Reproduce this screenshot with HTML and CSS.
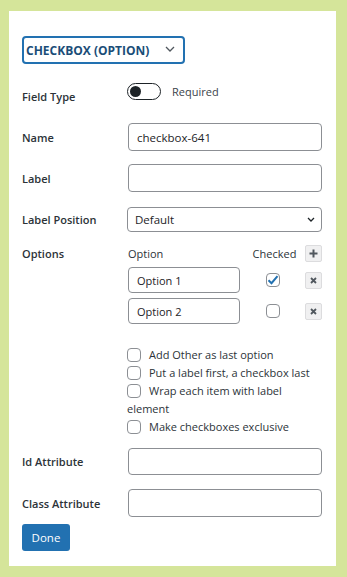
FILE: index.html
```html
<!DOCTYPE html>
<html>
<head>
<meta charset="utf-8">
<link rel="stylesheet" href="styles.css">
</head>
<body>
<div class="panel">
  <div class="type-select">
    <span class="type-text">CHECKBOX (OPTION)</span>
    <svg class="chev-lg" width="10" height="6" viewBox="0 0 10 6"><path d="M1 1l4 4 4-4" fill="none" stroke="#50575e" stroke-width="1.3"/></svg>
  </div>

  <div class="row row-type">
    <div class="lbl lbl-type">Field Type</div>
    <div class="ctl toggle-wrap">
      <span class="toggle"><span class="knob"></span></span>
      <span class="toggle-text">Required</span>
    </div>
  </div>

  <div class="row row-name">
    <div class="lbl">Name</div>
    <div class="ctl"><div class="input">checkbox-641</div></div>
  </div>

  <div class="row row-label">
    <div class="lbl">Label</div>
    <div class="ctl"><div class="input"></div></div>
  </div>

  <div class="row row-pos">
    <div class="lbl">Label Position</div>
    <div class="ctl">
      <div class="select">
        <span>Default</span>
        <svg width="8" height="5" viewBox="0 0 8 5"><path d="M1 1l3 3 3-3" fill="none" stroke="#1d2327" stroke-width="1.3"/></svg>
      </div>
    </div>
  </div>

  <div class="row row-options">
    <div class="lbl">Options</div>
    <div class="ctl">
      <div class="opt-grid">
        <div class="opt-head">Option</div>
        <div class="opt-head center">Checked</div>
        <div class="btn-sm"><svg width="9" height="9" viewBox="0 0 9 9"><path d="M4.5 0.5v8M0.5 4.5h8" stroke="#50575e" stroke-width="2"/></svg></div>

        <div class="input opt-input">Option 1</div>
        <div class="center"><span class="cb checked"><svg width="12" height="10" viewBox="0 0 12 10"><path d="M1.5 5.2l3 3 6-7" fill="none" stroke="#2271b1" stroke-width="2"/></svg></span></div>
        <div class="btn-sm"><svg width="7" height="7" viewBox="0 0 7 7"><path d="M1 1l5 5M6 1l-5 5" stroke="#50575e" stroke-width="1.8"/></svg></div>

        <div class="input opt-input">Option 2</div>
        <div class="center"><span class="cb"></span></div>
        <div class="btn-sm"><svg width="7" height="7" viewBox="0 0 7 7"><path d="M1 1l5 5M6 1l-5 5" stroke="#50575e" stroke-width="1.8"/></svg></div>
      </div>

      <div class="checks">
        <div class="check-line"><span class="cb"></span>Add Other as last option</div>
        <div class="check-line"><span class="cb"></span>Put a label first, a checkbox last</div>
        <div class="check-line"><span class="cb"></span>Wrap each item with label<br>element</div>
        <div class="check-line"><span class="cb"></span>Make checkboxes exclusive</div>
      </div>
    </div>
  </div>

  <div class="row row-id">
    <div class="lbl">Id Attribute</div>
    <div class="ctl"><div class="input tall"></div></div>
  </div>

  <div class="row row-class">
    <div class="lbl">Class Attribute</div>
    <div class="ctl"><div class="input"></div></div>
  </div>

  <div class="done">Done</div>
</div>
</body>
</html>
```

FILE: styles.css
```css
* { box-sizing: border-box; }
html, body { margin: 0; padding: 0; }
body {
  background: #d5e59a;
  font-family: "Open Sans", "Noto Sans", sans-serif;
  font-size: 11px;
  color: #1d2327;
  height: 577px;
  padding: 11px 11px 11px 9px;
}
.panel {
  background: #fff;
  height: 555px;
  padding: 25px 14px 14px 13px;
}
.type-select {
  width: 163px;
  height: 28px;
  border: 2px solid #2271b1;
  border-radius: 4px;
  display: flex;
  align-items: center;
  justify-content: space-between;
  padding: 0 8px 0 2px;
}
.type-text {
  font-weight: 700;
  font-size: 12px;
  color: #1a4d78;
}
.chev-lg { margin-top: -2px; }

.row { display: flex; align-items: center; }
.lbl {
  width: 106px;
  flex: none;
  font-weight: 600;
  color: #2c3338;
}
.ctl { flex: 1; min-width: 0; }

.row-type { margin-top: 19px; height: 17px; align-items: flex-start; }
.lbl-type { margin-top: 6px; }
.toggle-wrap { display: flex; align-items: center; margin-left: -1px; }
.toggle {
  width: 34px;
  height: 17px;
  border: 1.5px solid #1d2327;
  border-radius: 9px;
  display: flex;
  align-items: center;
  padding-left: 2px;
}
.knob { width: 11px; height: 11px; border-radius: 50%; background: #1d2327; }
.toggle-text { margin-left: 11px; color: #3c434a; font-size: 11px; margin-top: -1px; }

.input {
  height: 28px;
  border: 1px solid #8c8f94;
  border-radius: 4px;
  padding: 0 8px;
  display: flex;
  align-items: center;
  font-size: 11.5px;
}
.input.tall { height: 27px; }

.row-name { margin-top: 23px; }
.row-label { margin-top: 13px; }
.row-pos { margin-top: 15px; }
.select {
  height: 25px;
  margin-left: -1px;
  border: 1px solid #8c8f94;
  border-radius: 4px;
  padding: 0 6px 0 7px;
  display: flex;
  align-items: center;
  justify-content: space-between;
  font-size: 11.5px;
}

.row-options { margin-top: 13px; align-items: flex-start; }
.row-options .lbl { line-height: 17px; }
.opt-grid {
  display: grid;
  grid-template-columns: 112px 1fr 17px;
  grid-auto-rows: auto;
  row-gap: 5px;
  align-items: center;
}
.opt-head { height: 17px; line-height: 17px; font-size: 11px; color: #2c3338; }
.center { display: flex; justify-content: center; }
.opt-head.center { display: block; text-align: center; padding-left: 4px; }
.opt-input { height: 26px; padding-left: 8px; font-size: 11px; }
.btn-sm {
  width: 17px;
  height: 17px;
  border: 1px solid #dcdcde;
  border-radius: 2px;
  background: #f0f0f1;
  display: flex;
  align-items: center;
  justify-content: center;
}
.cb {
  display: inline-flex;
  align-items: center;
  justify-content: center;
  width: 14px;
  height: 14px;
  border: 1px solid #8c8f94;
  border-radius: 4px;
  background: #fff;
  vertical-align: -3px;
}
.cb.checked svg { margin-top: -1px; }

.checks { margin-top: 22px; margin-left: -1px; }
.check-line { line-height: 18px; font-size: 11px; color: #2c3338; }
.check-line .cb { margin-right: 8px; }

.row-id { margin-top: 12px; }
.row-class { margin-top: 14px; }
.done {
  margin-top: 7px;
  width: 48px;
  height: 27px;
  background: #2271b1;
  border-radius: 3px;
  color: #fff;
  display: flex;
  align-items: center;
  justify-content: center;
  font-size: 11.5px;
}
```
